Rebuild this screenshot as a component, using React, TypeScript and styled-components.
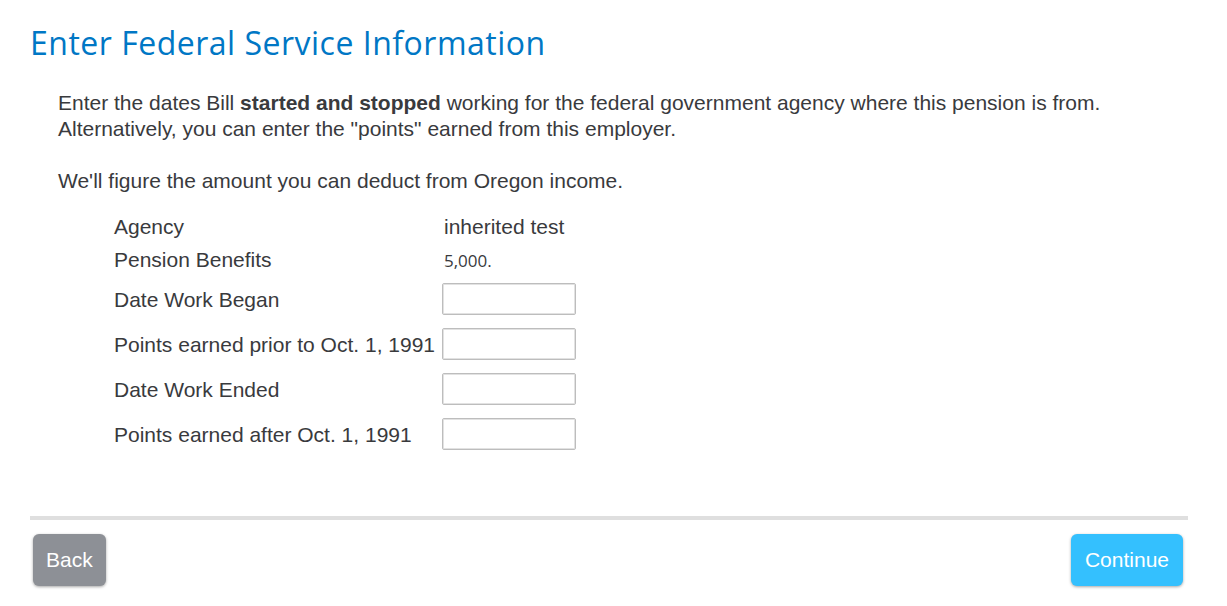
import styled, { createGlobalStyle } from "styled-components";

const GlobalStyle = createGlobalStyle`
  html, body {
    margin: 0;
    padding: 0;
    background: #ffffff;
  }
  body {
    font-family: "Liberation Sans", Arial, sans-serif;
    color: #393a3d;
  }
`;

const Page = styled.div`
  width: 1227px;
  height: 606px;
  box-sizing: border-box;
  padding: 23px 39px 0 30px;
  display: flex;
  flex-direction: column;
`;

const Title = styled.h1`
  margin: 0;
  font-family: "Open Sans", Lato, sans-serif;
  font-weight: 400;
  font-size: 32px;
  line-height: 40px;
  letter-spacing: 0.5px;
  color: #0077c5;
`;

const Intro = styled.div`
  padding: 0 0 0 28px;
  margin-top: 27px;
  font-size: 21px;
  line-height: 26px;
  color: #393a3d;
`;

const Paragraph = styled.p`
  margin: 0 0 26px 0;
`;

const FieldGrid = styled.div`
  display: grid;
  grid-template-columns: 328px 134px;
  align-items: center;
  margin-left: 84px;
  margin-top: -9px;
`;

const Label = styled.div<{ $h: number }>`
  height: ${(p) => p.$h}px;
  display: flex;
  align-items: center;
  font-size: 21px;
  white-space: nowrap;
  color: #393a3d;
`;

const Value = styled.div<{ $small?: boolean; $h: number }>`
  height: ${(p) => p.$h}px;
  display: flex;
  align-items: center;
  padding-left: 2px;
  font-family: ${(p) =>
    p.$small ? '"Open Sans", "Noto Sans", sans-serif' : '"Liberation Sans", Arial, sans-serif'};
  font-size: ${(p) => (p.$small ? 17 : 21)}px;
  color: #393a3d;
`;

const InputCell = styled.div`
  height: 45px;
  display: flex;
  align-items: center;
`;

const TextInput = styled.input`
  box-sizing: border-box;
  width: 134px;
  height: 32px;
  margin-top: -1px;
  border: 1px solid #bdbdbd;
  box-shadow: inset 0 0 0 1px #e2e2e2;
  border-radius: 2px;
  background: #ffffff;
  font-family: "Liberation Sans", Arial, sans-serif;
  font-size: 16px;
  padding: 0 6px;
  outline: none;
`;

const Spacer = styled.div`
  flex: 1;
`;

const Divider = styled.hr`
  margin: 0 0 14px 0;
  border: none;
  height: 4px;
  background: #dfdfdf;
`;

const Footer = styled.div`
  display: flex;
  justify-content: space-between;
  padding: 0 5px 0 3px;
  margin-bottom: 20px;
`;

const Button = styled.button<{ $primary?: boolean }>`
  height: 52px;
  padding: 0 ${(p) => (p.$primary ? 14 : 13)}px;
  border: none;
  border-radius: 6px;
  background: ${(p) => (p.$primary ? "#34c0fe" : "#8d9096")};
  color: #ffffff;
  font-family: "Liberation Sans", Arial, sans-serif;
  font-size: 21px;
  box-shadow: 0 1px 3px rgba(0, 0, 0, 0.35);
  cursor: pointer;
`;

const fields = [
  "Date Work Began",
  "Points earned prior to Oct. 1, 1991",
  "Date Work Ended",
  "Points earned after Oct. 1, 1991",
];

export default function App() {
  return (
    <>
      <GlobalStyle />
      <Page>
        <Title>Enter Federal Service Information</Title>
        <Intro>
          <Paragraph>
            Enter the dates Bill <b>started and stopped</b> working for the
            federal government agency where this pension is from.
            <br />
            Alternatively, you can enter the "points" earned from this employer.
          </Paragraph>
          <Paragraph>We'll figure the amount you can deduct from Oregon income.</Paragraph>
        </Intro>
        <FieldGrid>
          <Label $h={32}>Agency</Label>
          <Value $h={32}>inherited test</Value>
          <Label $h={34}>Pension Benefits</Label>
          <Value $h={34} $small>
            5,000.
          </Value>
          {fields.flatMap((label) => [
            <Label key={label + "-label"} $h={45}>
              {label}
            </Label>,
            <InputCell key={label + "-input"}>
              <TextInput type="text" />
            </InputCell>,
          ])}
        </FieldGrid>
        <Spacer />
        <Divider />
        <Footer>
          <Button>Back</Button>
          <Button $primary>Continue</Button>
        </Footer>
      </Page>
    </>
  );
}
